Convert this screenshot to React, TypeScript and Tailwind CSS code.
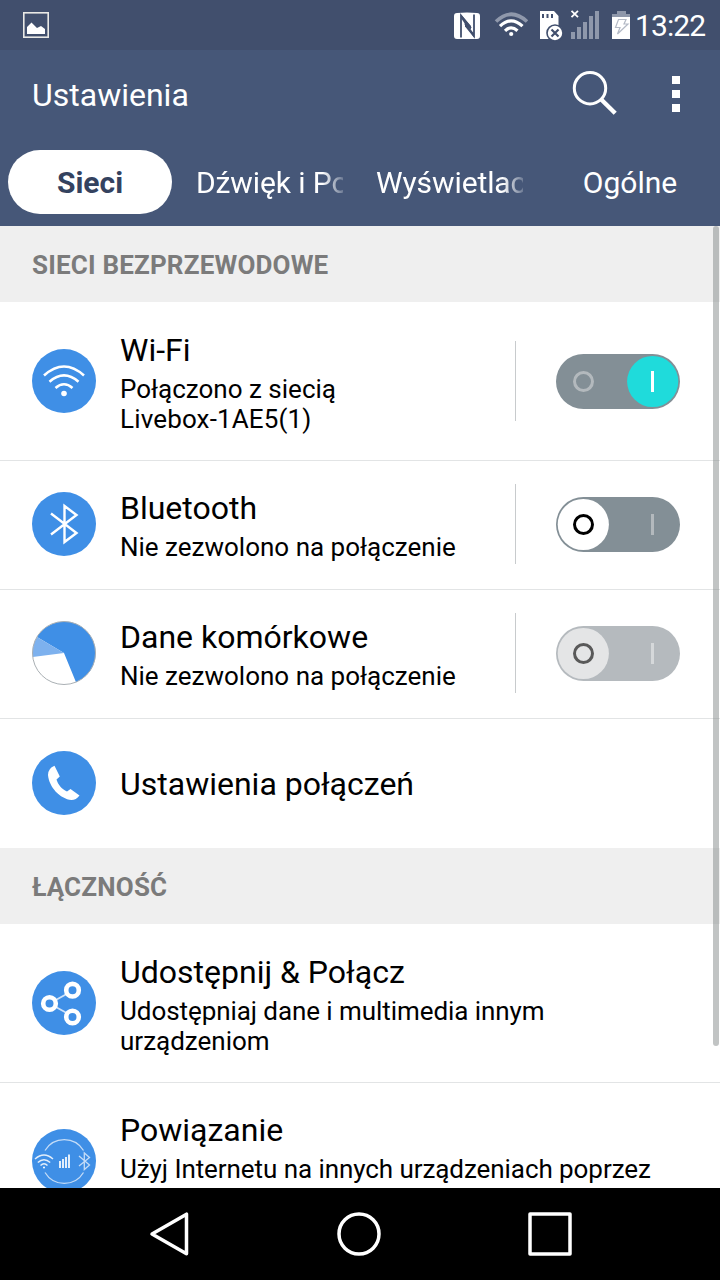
import React from 'react';
import clsx from 'clsx';

type SwitchState = 'on' | 'off' | 'disabled';

interface SettingsRowProps {
  icon: React.ReactNode;
  title: string;
  summary?: string[];
  toggle?: SwitchState;
  className: string;
}

const StatusBar: React.FC = () => (
  <div className="flex h-[50px] flex-none items-center justify-between bg-[#414f6d] text-white">
    <svg className="ml-[23px] h-[26px] w-[26px]" viewBox="0 0 26 26">
      <rect x="0.8" y="0.8" width="24.4" height="24.4" fill="none" stroke="#e9e9e6" strokeWidth="1.6" />
      <path d="M4 22V15L8.500 10.500L14 16L18 14L22 17V22Z" fill="#fff" />
    </svg>
    <div className="flex items-center">
      {/* NFC */}
      <svg className="h-[50px] w-[40px]" viewBox="440 0 40 50">
        <path d="M457 13Q467 12 477 13Q480 13.200 480 16V36Q480 39 477 39H457Q454 39 454 36V16Q454 13.200 457 13Z" fill="#fff" />
        <path d="M461 37.500V15.500L471 28M465 23.500L474 36V14.500" fill="none" stroke="#414f6d" strokeWidth="1.800" />
        <path d="M461 14.500L471 26V29.500L465 24L461 18Z" fill="#414f6d" />
        <path d="M465 23L474 33.500V37.500L465 26.500Z" fill="#414f6d" />
      </svg>
      {/* Wi-Fi */}
      <svg className="h-[50px] w-[55px]" viewBox="480 0 55 50">
        <path d="M496 21.500Q511 7 527 21.500" fill="none" stroke="#8f98ab" strokeWidth="3.600" />
        <path d="M500 26.200Q511 15.500 522.500 26.200M505 30.800Q511 25 517.500 30.800" fill="none" stroke="#fff" strokeWidth="3.200" />
        <circle cx="511.200" cy="34" r="2.100" fill="#fff" />
      </svg>
      {/* SD card */}
      <svg className="h-[50px] w-[35px]" viewBox="535 0 35 50">
        <path d="M540 11H554L558.500 16V39H540Z" fill="#fff" />
        <path d="M543 14V18M547.500 14V18M552 14V18" stroke="#414f6d" strokeWidth="2" />
        <circle cx="555" cy="33" r="8" fill="#fff" stroke="#414f6d" strokeWidth="1.600" />
        <path d="M551.500 29.500L558.500 36.500M558.500 29.500L551.500 36.500" stroke="#414f6d" strokeWidth="2.200" />
      </svg>
      {/* Signal and battery */}
      <svg className="h-[50px] w-[65px]" viewBox="570 0 65 50">
        <path d="M571.500 10.800L578 17.200M578 10.800L571.500 17.200" stroke="#fff" strokeWidth="1.800" />
        <path d="M573 39V32M579 39V27M585 39V22M591 39V16M597 39V11" stroke="#8f98ab" strokeWidth="4" />
        <path d="M617 11H626V14H630V17H612V14H617Z" fill="#8f98ab" />
        <rect x="612" y="17" width="18" height="22" fill="#fff" />
        <path d="M618.500 19.500H626L624 24H628L617.500 34L620 27.500H615.500Z" fill="none" stroke="#b4bac6" strokeWidth="1.200" />
      </svg>
      <span className="w-[85px] pt-[2px] text-[30px] leading-[50px] tracking-[-0.9px]">13:22</span>
    </div>
  </div>
);

const AppBar: React.FC = () => (
  <div className="flex h-[88px] flex-none items-center justify-between pl-8 text-white">
    <h1 className="pt-[2px] text-[32px] leading-[38px]">Ustawienia</h1>
    <svg className="h-[88px] w-[180px]" viewBox="540 50 180 88">
      <circle cx="590" cy="88.200" r="15.700" fill="none" stroke="#fff" strokeWidth="3" />
      <path d="M601.500 99.800L615.200 113.200" stroke="#fff" strokeWidth="4.400" />
      <path d="M672 76H680V84H672ZM672 90H680V98H672ZM672 104H680V112H672Z" fill="#fff" />
    </svg>
  </div>
);

const tabs = ['Sieci', 'Dźwięk i Po', 'Wyświetlac', 'Ogólne'];

const Tabs: React.FC = () => (
  <div className="grid h-[88px] flex-none grid-cols-4 pt-3 text-white">
    {tabs.map((label, i) => (
      <div
        key={label}
        className={clsx(
          'mx-2 h-16 rounded-full px-2 text-[30px] leading-[65px]',
          i === 0 && 'bg-white text-center font-bold text-[#34425f]',
          i === 3 && 'text-center',
        )}
      >
        <div
          className={clsx(
            'whitespace-nowrap',
            (i === 1 || i === 2) &&
              'w-[147px] tracking-[-0.1px] [mask-image:linear-gradient(to_right,black_86%,transparent_104%)]',
          )}
        >
          {label}
        </div>
      </div>
    ))}
  </div>
);

const SectionHeader: React.FC<{ children: string }> = ({ children }) => (
  <h2 className="h-[76px] flex-none bg-[#efefef] pl-8 text-[26px] leading-[79px] font-bold tracking-[0.18px] text-[#7b7b7b]">
    {children}
  </h2>
);

const Toggle: React.FC<{ state: SwitchState }> = ({ state }) => {
  const on = state === 'on';
  const disabled = state === 'disabled';
  return (
    <svg className="h-[55px] w-[124px]" viewBox="0 0 124 55">
      <rect width="124" height="55" rx="27.5" fill={disabled ? '#b5babe' : '#838f96'} />
      <circle cx={on ? 96.7 : 27.3} cy="27.5" r="25.6" fill={on ? '#1fdbdb' : disabled ? '#e4e5e6' : '#fff'} />
      <circle
        cx="27.5"
        cy="27.500"
        r="9"
        fill="none"
        stroke={on ? '#b3b9bd' : disabled ? '#595959' : '#000'}
        strokeWidth="3"
      />
      <rect x="95" y="17" width="3" height="21" fill={on ? '#fff' : disabled ? '#d5d8da' : '#b3b9bd'} />
    </svg>
  );
};

const SettingsRow: React.FC<SettingsRowProps> = ({ icon, title, summary, toggle, className }) => (
  <div className={clsx('flex flex-none items-center pl-8', className)}>
    <svg className="h-16 w-16 flex-none" viewBox="0 0 64 64">{icon}</svg>
    <div className="ml-6 flex-1 pt-[2px]">
      <div className="text-[32px] leading-[38px]">{title}</div>
      {summary && (
        <div className="mt-[5px] text-[26px] leading-[30px]">
          {summary.map((line) => (
            <div
              key={line}
              className={clsx(
                'whitespace-nowrap',
                line.startsWith('Livebox') && 'tracking-[0.15px]',
                line.length > 30 && 'tracking-[-0.07px]',
              )}
            >
              {line}
            </div>
          ))}
        </div>
      )}
    </div>
    {toggle && (
      <div className="mr-10 flex h-20 w-[165px] flex-none items-center justify-end border-l border-[#c8cbcd]">
        <Toggle state={toggle} />
      </div>
    )}
  </div>
);

const Disc = () => <circle cx="32" cy="32" r="32" fill="#3f8fe6" />;

const wifiIcon = (
  <>
    <Disc />
    <path d="M12 26.500Q32 8.500 52 26.500M17.500 32.700Q32 20 46.500 32.700M23.500 39Q32 31.500 40.500 39" fill="none" stroke="#fff" strokeWidth="2.600" />
    <circle cx="32" cy="44.500" r="2.800" fill="#fff" />
  </>
);

const bluetoothIcon = (
  <>
    <Disc />
    <path d="M19 21.500L44.500 41L32.500 50V14L44.500 23L19 42.500" fill="none" stroke="#fff" strokeWidth="2.400" />
  </>
);

const dataIcon = (
  <>
    <circle cx="32" cy="32" r="31.500" fill="#fff" />
    <path d="M32 32L5 16A31.500 31.500 0 1 1 44 61.200Z" fill="#3f8fe6" />
    <path d="M32 32L5 16A31.500 31.500 0 0 0 0.700 36Z" fill="#7db1ee" />
    <circle cx="32" cy="32" r="31.500" fill="none" stroke="#aab0b4" strokeWidth="1" />
  </>
);

const phoneIcon = (
  <>
    <Disc />
    <path d="M22.500 14.800Q16 17.500 16 24C17 36 28 48 39.500 49Q44 49 47.500 44.500L38.500 38L35 40.500C29.500 38 26 33.500 24.500 28.500L27.800 25.500Z" fill="#fff" />
  </>
);

const shareIcon = (
  <>
    <Disc />
    <path d="M41 19.500L17.500 32.500L41 45.500" fill="none" stroke="#cfe2f9" strokeWidth="1.800" />
    <g fill="#3f8fe6" stroke="#fff" strokeWidth="4.600">
      <circle cx="40.500" cy="19.200" r="6.300" />
      <circle cx="17.500" cy="32.500" r="6.300" />
      <circle cx="40.500" cy="46" r="6.300" />
    </g>
  </>
);

const tetheringIcon = (
  <>
    <Disc />
    <path d="M13 21.500A22.500 22.500 0 0 1 51.500 21.500M13 43.500A22.500 22.500 0 0 0 51.500 43.500" fill="none" stroke="#c4dcf7" strokeWidth="1.300" />
    <path d="M3 30Q12 22 21 30M5.800 33.500Q12 28 18.200 33.500M8.500 36.500Q12 33 15.500 36.500" fill="none" stroke="#e3eefb" strokeWidth="1.400" />
    <circle cx="12" cy="38.500" r="1" fill="#fff" />
    <path d="M28 39V32M31 39V30M34 39V28M37 39V25.500" stroke="#fff" strokeWidth="1.700" />
    <path d="M47 27L57.500 36L52.300 40.500V24L57.500 28.500L47 37" fill="none" stroke="#c4dcf7" strokeWidth="1.300" />
  </>
);

const NavBar: React.FC = () => (
  <div className="flex h-[92px] flex-none justify-center bg-black">
    <svg className="h-[92px] w-[720px]" viewBox="0 0 720 92" fill="none" stroke="#fff" strokeWidth="3.500" strokeLinejoin="round">
      <path d="M152 46L186.500 26.200V65.800Z" />
      <circle cx="359" cy="46" r="20" />
      <rect x="530" y="26" width="40" height="40" />
    </svg>
  </div>
);

export default function App() {
  return (
    <div className="flex h-[1280px] w-[720px] flex-col overflow-hidden bg-white font-['Roboto',sans-serif] text-black">
      <StatusBar />
      <header className="flex-none bg-[#465778]">
        <AppBar />
        <Tabs />
      </header>

      <main className="relative flex min-h-0 flex-1 flex-col overflow-hidden">
        <SectionHeader>SIECI BEZPRZEWODOWE</SectionHeader>
        <SettingsRow
          className="h-[159px] border-b border-[#e2e4e5]"
          icon={wifiIcon}
          title="Wi-Fi"
          summary={['Połączono z siecią', 'Livebox-1AE5(1)']}
          toggle="on"
        />
        <SettingsRow
          className="h-[129px] border-b border-[#e2e4e5] pb-[2px]"
          icon={bluetoothIcon}
          title="Bluetooth"
          summary={['Nie zezwolono na połączenie']}
          toggle="off"
        />
        <SettingsRow
          className="h-[129px] border-b border-[#e2e4e5] pb-[2px]"
          icon={dataIcon}
          title="Dane komórkowe"
          summary={['Nie zezwolono na połączenie']}
          toggle="disabled"
        />
        <SettingsRow className="h-[129px] pb-[2px]" icon={phoneIcon} title="Ustawienia połączeń" />

        <SectionHeader>ŁĄCZNOŚĆ</SectionHeader>
        <SettingsRow
          className="h-[159px] border-b border-[#e2e4e5]"
          icon={shareIcon}
          title="Udostępnij & Połącz"
          summary={['Udostępniaj dane i multimedia innym', 'urządzeniom']}
        />
        {/* The second summary line is below the fold */}
        <SettingsRow
          className="h-[158px] pb-[2px]"
          icon={tetheringIcon}
          title="Powiązanie"
          summary={['Użyj Internetu na innych urządzeniach poprzez', '\u00a0']}
        />

        {/* Scroll indicator */}
        <div className="absolute top-0 right-px h-[820px] w-1.5 rounded-full bg-[#848a8a]/50" />
      </main>

      <NavBar />
    </div>
  );
}
